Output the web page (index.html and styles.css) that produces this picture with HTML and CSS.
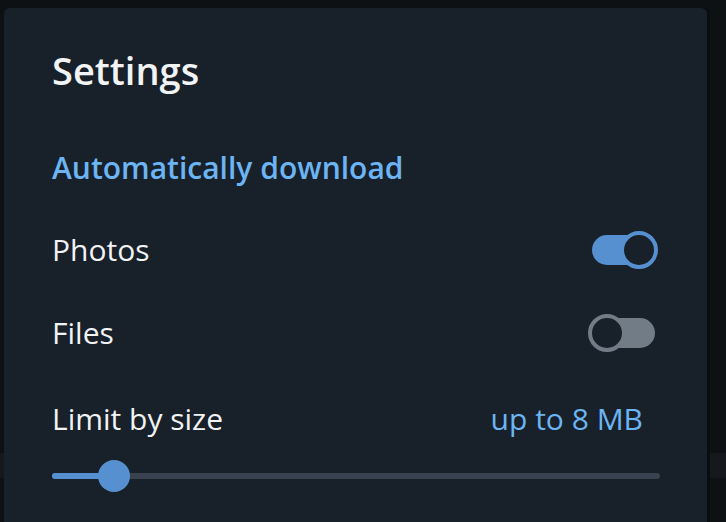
FILE: index.html
```html
<!DOCTYPE html>
<html lang="en">
<head>
<meta charset="utf-8">
<title>Settings</title>
<link rel="stylesheet" href="styles.css">
</head>
<body>
<main class="panel">
  <h1 class="title">Settings</h1>
  <h2 class="section">Automatically download</h2>
  <div class="row row-photos">
    <span class="label">Photos</span>
    <span class="toggle on"><span class="knob"></span></span>
  </div>
  <div class="row row-files">
    <span class="label">Files</span>
    <span class="toggle off"><span class="knob"></span></span>
  </div>
  <div class="row row-limit">
    <span class="label">Limit by size</span>
    <span class="value">up to 8 MB</span>
  </div>
  <div class="slider">
    <div class="slider-track">
      <div class="slider-fill" style="width: 62px"></div>
      <div class="slider-thumb" style="left: 62px"></div>
    </div>
  </div>
</main>
</body>
</html>
```

FILE: styles.css
```css
html, body {
  margin: 0;
  padding: 0;
  height: 100%;
}

body {
  background: linear-gradient(to bottom, #0d1114 0, #0d1114 453px, #15191d 453px, #15191d 478px, #0d1114 478px);
  font-family: "Open Sans", "Noto Sans", sans-serif;
  overflow: hidden;
}

.panel {
  box-sizing: border-box;
  margin: 8px 0 0 4px;
  width: 703px;
  height: 540px;
  background: #18202a;
  border-radius: 6px 6px 0 0;
  box-shadow: 3px 0 0 #0a0d10;
  padding: 0 52px 0 48px;
  display: flex;
  flex-direction: column;
}

.title {
  margin: 42px 0 0;
  height: 40px;
  line-height: 40px;
  font-size: 38px;
  font-weight: 600;
  color: #f1f3f5;
}

.section {
  margin: 58px 0 0;
  height: 40px;
  line-height: 40px;
  font-size: 30px;
  font-weight: 600;
  color: #6cb4f2;
}

.row {
  height: 50px;
  display: flex;
  align-items: center;
  justify-content: space-between;
}

.row-photos { margin-top: 37px; }
.row-files { margin-top: 33px; }
.row-limit { margin-top: 36px; }

.label {
  font-size: 30px;
  line-height: 50px;
  color: #f1f3f5;
}

.value {
  font-size: 30px;
  line-height: 50px;
  color: #6cb4f2;
  margin-right: 12px;
}

.toggle {
  position: relative;
  width: 63px;
  height: 30px;
  border-radius: 15px;
}

.toggle.on { background: #5690d0; }
.toggle.off { background: #717c87; }

.knob {
  position: absolute;
  top: -4px;
  width: 38px;
  height: 38px;
  box-sizing: border-box;
  border-radius: 50%;
  background: #18202a;
  border: 4px solid;
}

.toggle.on .knob { right: -3px; border-color: #5690d0; }
.toggle.off .knob { left: -4px; border-color: #717c87; }

.slider {
  margin-top: 16px;
  height: 32px;
  display: flex;
  align-items: center;
  margin-right: -5px;
}

.slider-track {
  position: relative;
  flex: 1;
  height: 6px;
  border-radius: 3px;
  background: #38434f;
}

.slider-fill {
  height: 100%;
  border-radius: 3px;
  background: #5690d0;
}

.slider-thumb {
  position: absolute;
  top: 50%;
  width: 32px;
  height: 32px;
  margin: -16px 0 0 -16px;
  border-radius: 50%;
  background: #5690d0;
}
```
